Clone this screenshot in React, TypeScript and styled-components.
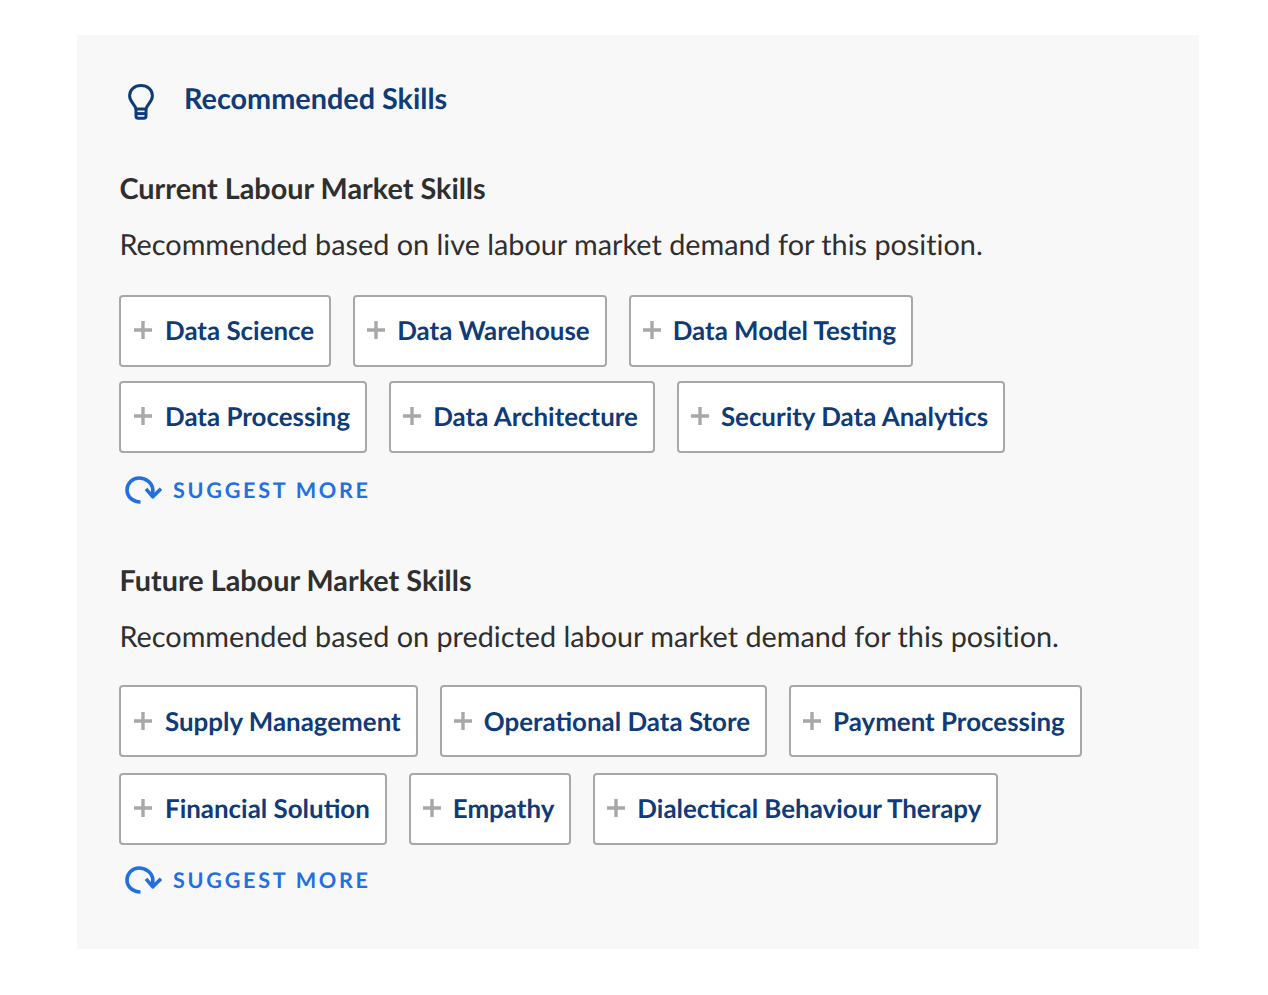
import React from 'react';
import styled, { createGlobalStyle } from 'styled-components';

const GlobalStyle = createGlobalStyle`
  html, body {
    margin: 0;
    padding: 0;
    background: #fff;
    font-family: Lato, 'Open Sans', sans-serif;
    font-variant-ligatures: none;
    text-rendering: geometricPrecision;
  }
`;

const Page = styled.div`
  padding: 35px 69px 46px 77px;
`;

const Card = styled.section`
  height: 914px;
  box-sizing: border-box;
  padding: 42px 42px 0 42.5px;
  background-color: #f8f8f8;
`;

const Header = styled.div`
  display: flex;
  align-items: center;
  gap: 30px;
  height: 40px;
  padding-left: 8.5px;

  svg {
    margin-top: 10px;
  }
`;

const Title = styled.h2`
  margin: 4px 0 0;
  color: #0f3b78;
  font-size: 28.8px;
  font-weight: 700;
`;

const Group = styled.div<{ $top: number }>`
  margin-top: ${(p) => p.$top}px;
`;

const GroupTitle = styled.h3`
  margin: 0;
  color: #2f2f2f;
  font-size: 28.8px;
  line-height: 36px;
  font-weight: 700;
`;

const Description = styled.p`
  margin: 20px 0 0;
  color: #2f2f2f;
  font-size: 28.8px;
  line-height: 36px;
  font-weight: 400;
`;

const Chips = styled.div<{ $rowGap: number; $top: number }>`
  display: flex;
  flex-direction: column;
  row-gap: ${(p) => p.$rowGap}px;
  margin-top: ${(p) => p.$top}px;
  margin-left: -0.5px;
`;

const Row = styled.div`
  display: flex;
  gap: 22px;
`;

const Chip = styled.button<{ $low?: boolean }>`
  display: flex;
  align-items: center;
  gap: 11px;
  height: 72px;
  box-sizing: border-box;
  padding: ${(p) => (p.$low ? '0 15px 0 11px' : '0 15px 3px 11px')};
  background-color: #fff;
  border: 2px solid #a8a8a8;
  border-radius: 4px;
  color: #0f3b78;
  font-family: inherit;
  font-size: 25.92px;
  font-weight: 700;
  text-rendering: geometricPrecision;

  &:first-child {
    gap: 12px;
    padding-left: 12px;
  }
`;

const SuggestMore = styled.button<{ $top: number }>`
  display: flex;
  align-items: center;
  gap: 11px;
  margin: ${(p) => p.$top}px 0 0 5.5px;
  padding: 0;
  background: none;
  border: none;
  color: #2270e0;
  font-family: inherit;
  font-size: 21.6px;
  font-weight: 700;
  letter-spacing: 2.7px;
  text-rendering: geometricPrecision;
`;

const BulbIcon = () => (
  <svg width="26" height="36" viewBox="0 0 26 36" fill="none" stroke="#0f3b78" strokeWidth="3">
    <path d="M8 25 C7.6 20.5 1.6 18.5 1.6 11.8 C1.6 5.6 6.6 1.6 13 1.6 C19.4 1.6 24.4 5.6 24.4 11.8 C24.4 18.5 18.4 20.5 18 25 Z" strokeLinejoin="round" />
    <path d="M8 25 V32 C8 33.4 8.8 34.3 10.2 34.3 H15.8 C17.2 34.3 18 33.4 18 32 V25" />
    <path d="M8 29.6 H18" />
  </svg>
);

const PlusIcon = () => (
  <svg width="20" height="20" viewBox="0 0 20 20" stroke="#a8a8a8" strokeWidth="3.4">
    <path d="M10 1 V19 M1 10 H19" />
  </svg>
);

const RefreshIcon = () => (
  <svg width="37" height="28" viewBox="0 0 37 28" fill="none" stroke="#2270e0" strokeWidth="3.6">
    <path d="M15.5 26 C7.5 26 2 20.5 2 14 C2 7.2 7.5 2 14 2 C21 2 27.5 7 27.8 13.5 V20.5" />
    <path d="M21 12.8 L27.8 20.8 L36 12.8" strokeLinejoin="round" />
  </svg>
);

const SkillChip = ({ label, low }: { label: string; low?: boolean }) => (
  <Chip type="button" $low={low}>
    <PlusIcon />
    {label}
  </Chip>
);

const groups = [
  {
    title: 'Current Labour Market Skills',
    description: 'Recommended based on live labour market demand for this position.',
    rows: [
      ['Data Science', 'Data Warehouse', 'Data Model Testing'],
      ['Data Processing', 'Data Architecture', 'Security Data Analytics'],
    ],
    top: 54,
    chipsTop: 32,
    rowGap: 14,
    suggestTop: 23,
    lowRow: -1,
  },
  {
    title: 'Future Labour Market Skills',
    description: 'Recommended based on predicted labour market demand for this position.',
    rows: [
      ['Supply Management', 'Operational Data Store', 'Payment Processing'],
      ['Financial Solution', 'Empathy', 'Dialectical Behaviour Therapy'],
    ],
    top: 59,
    chipsTop: 30,
    rowGap: 16,
    suggestTop: 21,
    lowRow: 0,
  },
];

const App = () => (
  <Page>
    <GlobalStyle />
    <Card>
      <Header>
        <BulbIcon />
        <Title>Recommended Skills</Title>
      </Header>
      {groups.map((group) => (
        <Group key={group.title} $top={group.top}>
          <GroupTitle>{group.title}</GroupTitle>
          <Description>{group.description}</Description>
          <Chips $rowGap={group.rowGap} $top={group.chipsTop}>
            {group.rows.map((row, i) => (
              <Row key={row[0]}>
                {row.map((skill) => (
                  <SkillChip key={skill} label={skill} low={i === group.lowRow} />
                ))}
              </Row>
            ))}
          </Chips>
          <SuggestMore type="button" $top={group.suggestTop}>
            <RefreshIcon />
            SUGGEST MORE
          </SuggestMore>
        </Group>
      ))}
    </Card>
  </Page>
);

export default App;
